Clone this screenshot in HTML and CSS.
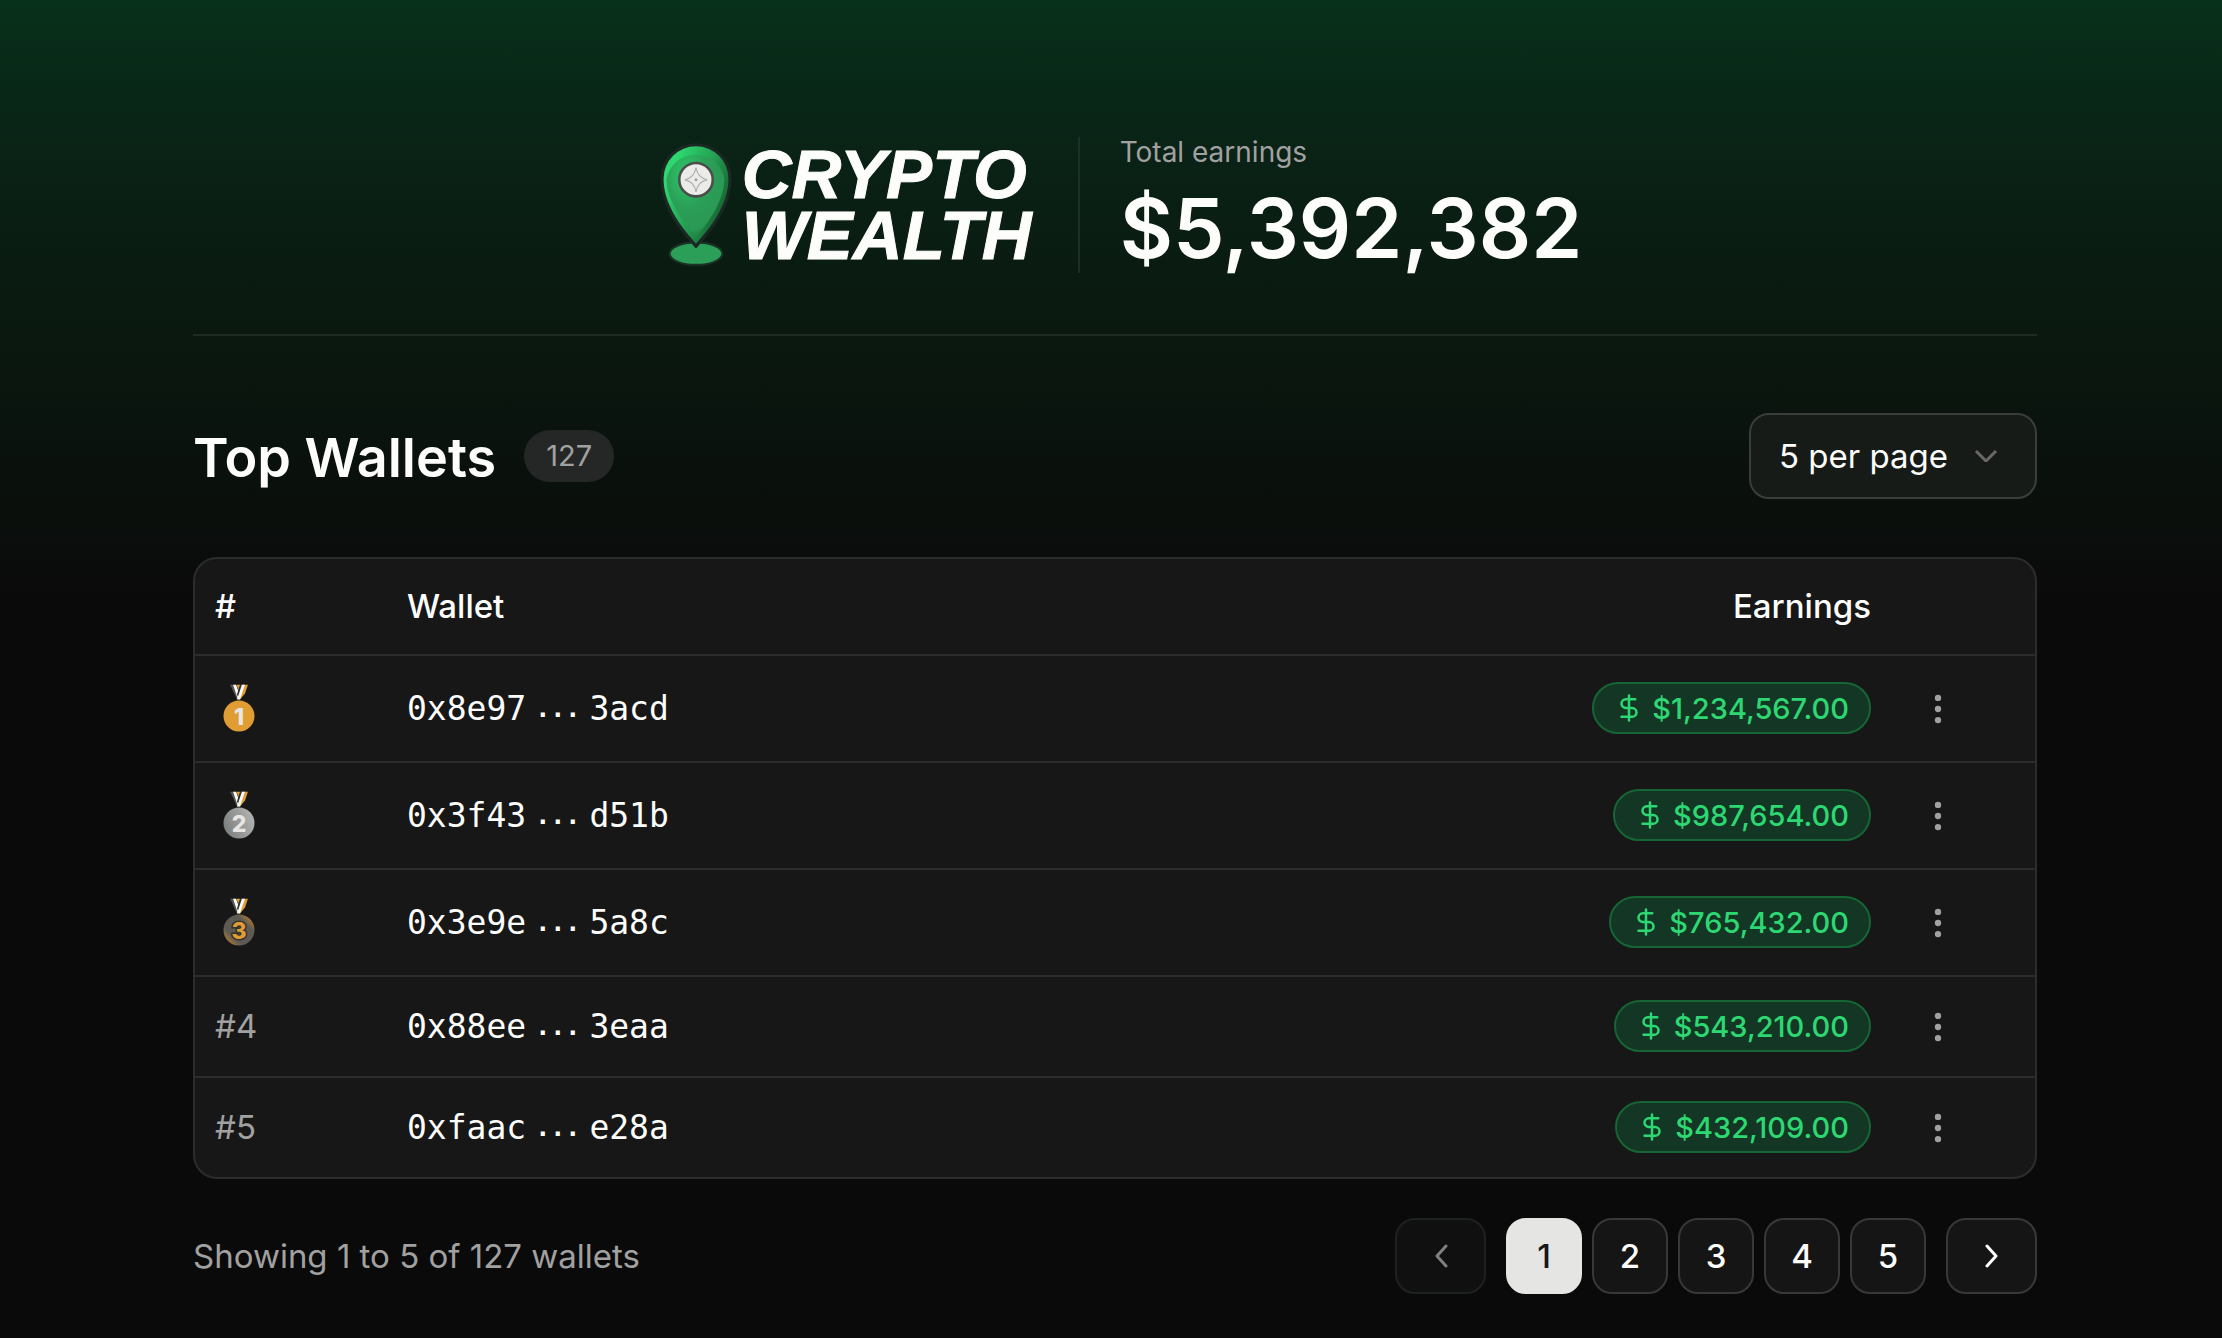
FILE: index.html
```html
<!DOCTYPE html>
<html lang="en">
<head>
    <meta charset="UTF-8">
    <meta name="viewport" content="width=device-width, initial-scale=1.0">
    <title>Crypto Wealth</title>
    <link rel="stylesheet" href="styles.css">
</head>
<body>
    <!-- Shared icons -->
    <svg class="sprite" aria-hidden="true">
        <symbol id="dollar" viewBox="0 0 24 24">
            <path d="M12 2v20M17 5H9.5a3.5 3.5 0 0 0 0 7h5a3.5 3.5 0 0 1 0 7H6"/>
        </symbol>
        <symbol id="dots" viewBox="0 0 24 24">
            <circle cx="12" cy="5" r="2"/>
            <circle cx="12" cy="12" r="2"/>
            <circle cx="12" cy="19" r="2"/>
        </symbol>
        <symbol id="ribbon" viewBox="0 0 32 48">
            <path d="M7 0h5l4 10-2 5z" fill="#55534f"/>
            <path d="M10 0h3l4 11-2 4z" fill="#fdfdfc"/>
            <path d="M13 0h4l-1 6z" fill="#e09d33"/>
            <path d="M20 0h5l-3 9-5 6-3-1z" fill="#e09d33"/>
            <path d="M18 0h4l-5 15h-3z" fill="#fdfdfc"/>
            <path d="M16 3l2-3h1l-4 12-1-2z" fill="#343230"/>
        </symbol>
    </svg>

    <header class="header">
        <a class="logo" href="#">
            <svg class="logo-pin" viewBox="0 0 71 122" aria-hidden="true">
                <defs>
                    <linearGradient id="pinRim" x1="0" y1="0" x2="1" y2="0.6">
                        <stop offset="0.2" stop-color="#2dd870"/>
                        <stop offset="0.65" stop-color="#249a50"/>
                        <stop offset="1" stop-color="#14612f"/>
                    </linearGradient>
                    <radialGradient id="pinBody" cx="0.35" cy="0.25" r="0.8">
                        <stop offset="0.2" stop-color="#2cb862"/>
                        <stop offset="0.5" stop-color="#2b9e57"/>
                        <stop offset="0.85" stop-color="#2a9955"/>
                        <stop offset="1" stop-color="#1d7840"/>
                    </radialGradient>
                </defs>
                <ellipse cx="35.5" cy="109" rx="26" ry="11" fill="#2b9f58" stroke="#1b3326" stroke-width="2"/>
                <path d="M35.5 101C22 86 2.500 63 2.500 35a33 33 0 0 1 66 0C68.500 63 49 86 35.500 101z" fill="#1b2f25" stroke="#1b2823" stroke-width="4"/>
                <path d="M35.5 99C22 84 3.500 61 3.500 35a32 32 0 0 1 64 0C67.500 61 49 84 35.500 99z" fill="url(#pinRim)"/>
                <path d="M35.5 92C24 79 6.500 58 6.500 35a29 29 0 0 1 57 0C63 58 47 79 35.500 92z" fill="url(#pinBody)"/>
                <circle cx="35.5" cy="36" r="16.5" fill="#ebebe9" stroke="#4b4e48" stroke-width="2.5"/>
                <path d="M35.5 24q1.5 10 11 12-9.5 2-11 12-1.5-10-11-12 9.5-2 11-12z" fill="none" stroke="#a4a4a2"/>
                <circle cx="35.5" cy="36" r="1.5" fill="#a4a4a2"/>
            </svg>
            <span class="logo-text">CRYPTO<br>WEALTH</span>
        </a>
        <div class="total">
            <div class="total-label">Total earnings</div>
            <div class="total-value">$5,392,382</div>
        </div>
    </header>

    <main>
        <div class="toolbar">
            <h1>Top Wallets</h1>
            <span class="count">127</span>
            <div class="page-size">
                <select aria-label="Wallets per page">
                    <option selected>5 per page</option>
                    <option>10 per page</option>
                    <option>20 per page</option>
                </select>
                <svg class="chevron" viewBox="0 0 24 12" aria-hidden="true"><path d="M2 1l10 10L22 1"/></svg>
            </div>
        </div>

        <div class="card">
            <table>
                <thead>
                    <tr>
                        <th class="rank">#</th>
                        <th>Wallet</th>
                        <th class="earnings">Earnings</th>
                        <th class="actions"></th>
                    </tr>
                </thead>
                <tbody>
                    <tr>
                        <td class="rank">
                            <svg class="medal" viewBox="0 0 32 48" role="img" aria-label="First place">
                                <use href="#ribbon"/>
                                <circle cx="16" cy="31.5" r="15.5" fill="#e09d33"/>
                                <text class="gold" x="16" y="40">1</text>
                            </svg>
                        </td>
                        <td><div class="wallet"><span>0x8e97</span><span class="gap">...</span><span>3acd</span></div></td>
                        <td class="earnings"><span class="pill"><svg><use href="#dollar"/></svg>$1,234,567.00</span></td>
                        <td class="actions"><button class="menu" aria-label="Wallet actions"><svg><use href="#dots"/></svg></button></td>
                    </tr>
                    <tr>
                        <td class="rank">
                            <svg class="medal" viewBox="0 0 32 48" role="img" aria-label="Second place">
                                <defs>
                                    <linearGradient id="silver" x1="0" y1="0.6" x2="1" y2="0.2">
                                        <stop offset="0" stop-color="#7c807e"/>
                                        <stop offset="1" stop-color="#b4b6b4"/>
                                    </linearGradient>
                                </defs>
                                <use href="#ribbon"/>
                                <circle cx="16" cy="31.5" r="15.5" fill="url(#silver)"/>
                                <text class="silver" x="16" y="40">2</text>
                            </svg>
                        </td>
                        <td><div class="wallet"><span>0x3f43</span><span class="gap">...</span><span>d51b</span></div></td>
                        <td class="earnings"><span class="pill"><svg><use href="#dollar"/></svg>$987,654.00</span></td>
                        <td class="actions"><button class="menu" aria-label="Wallet actions"><svg><use href="#dots"/></svg></button></td>
                    </tr>
                    <tr>
                        <td class="rank">
                            <svg class="medal" viewBox="0 0 32 48" role="img" aria-label="Third place">
                                <defs>
                                    <linearGradient id="bronze" x1="0" y1="1" x2="1" y2="0">
                                        <stop offset="0.1" stop-color="#b07c30"/>
                                        <stop offset="0.3" stop-color="#5d5a54"/>
                                        <stop offset="0.7" stop-color="#5d5a54"/>
                                        <stop offset="0.9" stop-color="#b07c30"/>
                                    </linearGradient>
                                </defs>
                                <use href="#ribbon"/>
                                <circle cx="16" cy="31.5" r="15.5" fill="url(#bronze)"/>
                                <text class="bronze" x="16" y="40">3</text>
                            </svg>
                        </td>
                        <td><div class="wallet"><span>0x3e9e</span><span class="gap">...</span><span>5a8c</span></div></td>
                        <td class="earnings"><span class="pill"><svg><use href="#dollar"/></svg>$765,432.00</span></td>
                        <td class="actions"><button class="menu" aria-label="Wallet actions"><svg><use href="#dots"/></svg></button></td>
                    </tr>
                    <tr>
                        <td class="rank">#4</td>
                        <td><div class="wallet"><span>0x88ee</span><span class="gap">...</span><span>3eaa</span></div></td>
                        <td class="earnings"><span class="pill"><svg><use href="#dollar"/></svg>$543,210.00</span></td>
                        <td class="actions"><button class="menu" aria-label="Wallet actions"><svg><use href="#dots"/></svg></button></td>
                    </tr>
                    <tr>
                        <td class="rank">#5</td>
                        <td><div class="wallet"><span>0xfaac</span><span class="gap">...</span><span>e28a</span></div></td>
                        <td class="earnings"><span class="pill"><svg><use href="#dollar"/></svg>$432,109.00</span></td>
                        <td class="actions"><button class="menu" aria-label="Wallet actions"><svg><use href="#dots"/></svg></button></td>
                    </tr>
                </tbody>
            </table>
        </div>

        <div class="footer">
            <p>Showing 1 to 5 of 127 wallets</p>
            <nav class="pagination" aria-label="Pagination">
                <button class="arrow" aria-label="Previous page" disabled><svg viewBox="0 0 14 24"><path d="M12 2L3 12l9 10"/></svg></button>
                <div class="pages">
                    <button class="active" aria-current="page">1</button>
                    <button>2</button>
                    <button>3</button>
                    <button>4</button>
                    <button>5</button>
                </div>
                <button class="arrow" aria-label="Next page"><svg viewBox="0 0 14 24"><path d="M2 2l9 10-9 10"/></svg></button>
            </nav>
        </div>
    </main>
</body>
</html>
```
FILE: styles.css
```css
* {
    box-sizing: border-box;
}

body {
    margin: 0;
    padding: 0 185px 43px 193px;
    min-height: 100vh;
    background: #0a0a0a linear-gradient(#07301a, #0a2115 170px, #0a1a10 300px, #0a0a0a 600px) no-repeat;
    color: #fdfdfc;
    font-family: Inter, "Liberation Sans", sans-serif;
    font-size: 33px;
    line-height: 48px;
}

button, select {
    font: inherit;
    color: inherit;
    cursor: pointer;
}

.sprite {
    display: none;
}

/* Header */
.header {
    display: flex;
    justify-content: center;
    padding: 137px 0 61px 12px;
    border-bottom: 2px solid #1e2b23;
}

.logo {
    display: flex;
    align-items: center;
    gap: 10px;
    padding-right: 46px;
    color: inherit;
    text-decoration: none;
}

.logo-pin {
    width: 72px;
    height: 124px;
}

.logo-text {
    font-family: "Liberation Sans", Arial, sans-serif;
    font-size: 69px;
    font-weight: bold;
    font-style: italic;
    line-height: 61px;
    -webkit-text-stroke: 1px currentColor;
}

.total {
    padding-left: 40px;
    border-left: 2px solid #1e2f26;
}

.total-label {
    color: #a1a1a1;
    font-size: 28px;
    line-height: 30px;
}

.total-value {
    margin-top: 18px;
    font-size: 82px;
    font-weight: 600;
    line-height: 88px;
}

/* Title row */
.toolbar {
    display: flex;
    align-items: center;
    gap: 28px;
    padding: 77px 0 58px;
}

h1 {
    margin: 0;
    padding-top: 4px;
    font-size: 54px;
    font-weight: 600;
    line-height: 64px;
}

.count {
    padding: 0 22px;
    border-radius: 26px;
    background: #252726;
    color: #a1a1a1;
    font-size: 29px;
    line-height: 52px;
}

.page-size {
    position: relative;
    margin-left: auto;
}

.page-size select {
    appearance: none;
    field-sizing: content;
    height: 86px;
    padding: 0 87px 0 28px;
    border: 2px solid #3a3d3b;
    border-radius: 20px;
    background: #161b18;
}

.chevron {
    position: absolute;
    top: 37px;
    right: 39px;
    width: 24px;
    height: 12px;
    fill: none;
    stroke: #6b6764;
    stroke-width: 3;
    pointer-events: none;
}

/* Wallet table */
.card {
    overflow: hidden;
    border: 2px solid #2b2c2b;
    border-radius: 24px;
    background: #171717;
}

table {
    width: 100%;
    border-collapse: separate;
    border-spacing: 0;
}

th, td {
    padding: 23px 20px;
    border-bottom: 2px solid #2b2c2b;
    text-align: left;
}

th {
    padding: 23px 20px 24px;
    font-weight: 500;
}

tbody tr:last-child td {
    border-bottom: none;
}

td {
    line-height: 53px;
}

.rank {
    width: 192px;
}

td.rank {
    color: #a1a1a1;
}

th.earnings, td.earnings {
    text-align: right;
}

.actions {
    width: 144px;
}

.medal {
    display: block;
    width: 32px;
    height: 59px;
    margin-left: 8px;
}

.medal text {
    font-size: 23px;
    font-weight: 800;
    text-anchor: middle;
}

.gold, .silver {
    fill: #e8e6e2;
}

.bronze {
    fill: #e09d33;
    stroke: #33312e;
    stroke-width: 3;
    paint-order: stroke;
}

.wallet {
    display: flex;
    gap: 9px;
    font-family: "DejaVu Sans Mono", monospace;
}

.gap {
    font-size: 25px;
    font-weight: bold;
}

.pill {
    display: inline-flex;
    align-items: center;
    gap: 8px;
    height: 52px;
    padding: 0 20px;
    border: 2px solid #166534;
    border-radius: 26px;
    background: #143624;
    color: #2dd873;
    font-size: 29px;
    font-weight: 500;
    vertical-align: top;
}

.pill svg {
    width: 30px;
    height: 30px;
    fill: none;
    stroke: currentColor;
    stroke-width: 2;
    stroke-linecap: round;
    stroke-linejoin: round;
}

.menu {
    display: block;
    height: 52px;
    padding: 0 8px;
    border: none;
    background: none;
    color: #a1a1a1;
}

.menu svg {
    display: block;
    width: 38px;
    height: 38px;
    fill: currentColor;
}

/* Footer */
.footer {
    display: flex;
    justify-content: space-between;
    align-items: center;
    padding-top: 39px;
}

.footer p {
    margin: 0;
    color: #a1a1a1;
}

.pagination {
    display: flex;
    gap: 20px;
}

.pages {
    display: flex;
    gap: 10px;
}

.pagination button {
    display: flex;
    justify-content: center;
    align-items: center;
    width: 76px;
    height: 76px;
    padding: 0;
    border: 2px solid #363938;
    border-radius: 20px;
    background: #151515;
    font-weight: 500;
}

.pagination .active {
    border-color: #e5e5e3;
    background: #e5e5e3;
    color: #171717;
}

.pagination .arrow {
    width: 91px;
}

.arrow svg {
    width: 14px;
    height: 24px;
    fill: none;
    stroke: currentColor;
    stroke-width: 3;
    stroke-linecap: round;
    stroke-linejoin: round;
}

.pagination .arrow:disabled {
    border-color: #1d2220;
    background: #101010;
    color: #808080;
    cursor: default;
}
```
